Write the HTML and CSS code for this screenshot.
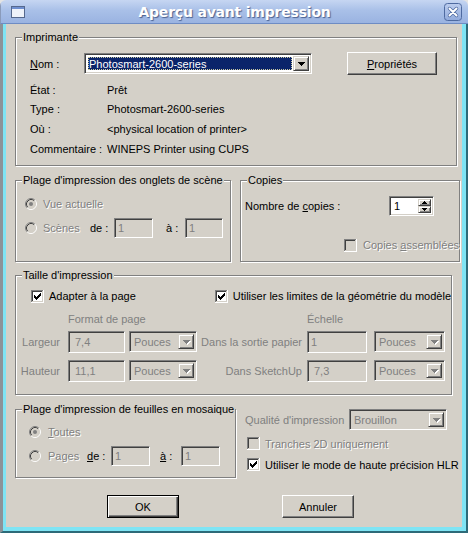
FILE: index.html
```html
<!DOCTYPE html>
<html lang="fr">
<head>
<meta charset="utf-8">
<title>Aperçu avant impression</title>
<link rel="stylesheet" href="styles.css">
</head>
<body>
<svg class="defs" width="0" height="0" aria-hidden="true">
  <defs>
    <symbol id="radio" viewBox="0 0 12 12">
      <circle cx="6" cy="6" r="4" fill="#d4d0c8"/>
      <path d="M2.11 9.89A5.5 5.5 0 0 1 9.89 2.11" fill="none" stroke="#808080"/>
      <path d="M9.89 2.11A5.5 5.5 0 0 1 2.11 9.89" fill="none" stroke="#ffffff"/>
      <path d="M2.82 9.18A4.5 4.5 0 0 1 9.18 2.82" fill="none" stroke="#404040"/>
      <path d="M9.18 2.82A4.5 4.5 0 0 1 2.82 9.18" fill="none" stroke="#d4d0c8"/>
    </symbol>
    <symbol id="radio-on" viewBox="0 0 12 12">
      <use href="#radio"/>
      <circle cx="6" cy="6" r="2" fill="#808080"/>
    </symbol>
    <symbol id="box" viewBox="0 0 13 13">
      <rect x="0" y="0" width="13" height="13" fill="#ffffff"/>
      <rect x="0" y="0" width="12" height="1" fill="#808080"/>
      <rect x="0" y="0" width="1" height="12" fill="#808080"/>
      <rect x="1" y="1" width="10" height="1" fill="#404040"/>
      <rect x="1" y="1" width="1" height="10" fill="#404040"/>
      <rect x="11" y="1" width="1" height="11" fill="#d4d0c8"/>
      <rect x="1" y="11" width="11" height="1" fill="#d4d0c8"/>
    </symbol>
    <symbol id="box-off" viewBox="0 0 13 13">
      <use href="#box"/>
      <rect x="2" y="2" width="9" height="9" fill="#d4d0c8"/>
    </symbol>
    <symbol id="box-on" viewBox="0 0 13 13">
      <use href="#box"/>
      <path fill="#000" d="M3 5h1v3h-1zM4 6h1v3h-1zM5 7h1v3h-1zM6 6h1v3h-1zM7 5h1v3h-1zM8 4h1v3h-1zM9 3h1v3h-1z"/>
    </symbol>
    <symbol id="arrow" viewBox="0 0 7 4">
      <path d="M0 0h7v1h-1v1h-1v1h-1v1h-1v-1h-1v-1h-1v-1h-1z"/>
    </symbol>
    <symbol id="arrow-up" viewBox="0 0 5 3">
      <path d="M2 0h1v1h1v1h1v1h-5v-1h1v-1h1z"/>
    </symbol>
    <symbol id="arrow-down" viewBox="0 0 5 3">
      <path d="M0 0h5v1h-1v1h-1v1h-1v-1h-1v-1h-1z"/>
    </symbol>
  </defs>
</svg>

<div class="window">
  <div class="titlebar">
    <svg class="app-icon" viewBox="0 0 14 12" width="14" height="12">
      <rect x="0.5" y="0.5" width="13" height="11" fill="#eef2fa" stroke="#55688e"/>
      <rect x="1" y="1" width="12" height="2" fill="#6f8fd0"/>
    </svg>
    <div class="title">Aperçu avant impression</div>
    <svg class="close" viewBox="0 0 18 18" width="18" height="18">
      <defs>
        <linearGradient id="cg" x1="0" y1="0" x2="0" y2="1">
          <stop offset="0" stop-color="#bccdee"/>
          <stop offset="1" stop-color="#92abdc"/>
        </linearGradient>
      </defs>
      <rect x="0.5" y="0.5" width="17" height="17" rx="3" fill="url(#cg)" stroke="#4e6aa0"/>
      <path d="M5.5 5.5l7 7M12.5 5.5l-7 7" stroke="#4e6aa0" stroke-width="3.4" stroke-linecap="round"/>
      <path d="M5.5 5.5l7 7M12.5 5.5l-7 7" stroke="#ffffff" stroke-width="2" stroke-linecap="round"/>
    </svg>
  </div>

  <div class="frame">
    <div class="client">

      <div class="group printer">
        <span class="legend">Imprimante</span>
        <div class="name-row">
          <span class="name-label"><u>N</u>om :</span>
          <div class="combo sunken">
            <span class="combo-value"><span class="sel">Photosmart-2600-series</span></span>
            <span class="drop-btn"><svg class="arr" width="7" height="4"><use href="#arrow"/></svg></span>
          </div>
          <div class="btn props"><u>P</u>ropriétés</div>
        </div>
        <div class="info">
          <span>État :</span><span>Prêt</span>
          <span>Type :</span><span>Photosmart-2600-series</span>
          <span>Où :</span><span>&lt;physical location of printer&gt;</span>
          <span>Commentaire :</span><span>WINEPS Printer using CUPS</span>
        </div>
      </div>

      <div class="row2">
        <div class="group scenes">
          <span class="legend">Plage d'impression des onglets de scène</span>
          <div class="radio-row">
            <svg class="radio" width="12" height="12"><use href="#radio-on"/></svg>
            <span class="dis">Vue actuelle</span>
          </div>
          <div class="radio-row">
            <span class="radio-wrap r-scenes">
              <svg class="radio" width="12" height="12"><use href="#radio"/></svg>
              <span class="dis">Scènes</span>
            </span>
            <span class="de">de :</span>
            <span class="field sunken f-39">1</span>
            <span class="a a-scenes">à :</span>
            <span class="field sunken f-38">1</span>
          </div>
        </div>

        <div class="group copies">
          <span class="legend">Copies</span>
          <div class="copies-row">
            <span class="copies-label">Nombre de <u>c</u>opies :</span>
            <div class="spinner sunken">
              <span class="spin-val">1</span>
              <span class="spin-btns">
                <span class="spin-btn"><svg width="5" height="3"><use href="#arrow-up"/></svg></span>
                <span class="spin-btn"><svg width="5" height="3"><use href="#arrow-down"/></svg></span>
              </span>
            </div>
          </div>
          <div class="collate-row">
            <svg class="check" width="13" height="13"><use href="#box-off"/></svg>
            <span class="dis">Copies <u>a</u>ssemblées</span>
          </div>
        </div>
      </div>

      <div class="group size">
        <span class="legend">Taille d'impression</span>
        <div class="check-row">
          <span class="check-wrap fit">
            <svg class="check" width="13" height="13"><use href="#box-on"/></svg>
            <span>Adapter à la page</span>
          </span>
          <span class="check-wrap">
            <svg class="check" width="13" height="13"><use href="#box-on"/></svg>
            <span>Utiliser les limites de la géométrie du modèle</span>
          </span>
        </div>
        <div class="hdr-row">
          <span class="gray hdr-format">Format de page</span>
          <span class="gray">Échelle</span>
        </div>
        <div class="size-row">
          <span class="gray lbl">Largeur</span>
          <span class="field sunken wide f-57">7,4</span>
          <span class="select sunken s-68"><span class="select-val">Pouces</span><span class="drop-btn dis-btn"><svg class="arr" width="7" height="4"><use href="#arrow"/></svg></span></span>
          <span class="gray lbl2">Dans la sortie papier</span>
          <span class="field sunken f-60">1</span>
          <span class="select sunken s-71"><span class="select-val">Pouces</span><span class="drop-btn dis-btn"><svg class="arr" width="7" height="4"><use href="#arrow"/></svg></span></span>
        </div>
        <div class="size-row second">
          <span class="gray lbl">Hauteur</span>
          <span class="field sunken wide f-57">11,1</span>
          <span class="select sunken s-68"><span class="select-val">Pouces</span><span class="drop-btn dis-btn"><svg class="arr" width="7" height="4"><use href="#arrow"/></svg></span></span>
          <span class="gray lbl2">Dans SketchUp</span>
          <span class="field sunken wide f-60">7,3</span>
          <span class="select sunken s-71"><span class="select-val">Pouces</span><span class="drop-btn dis-btn"><svg class="arr" width="7" height="4"><use href="#arrow"/></svg></span></span>
        </div>
      </div>

      <div class="row4">
        <div class="group tiles">
          <span class="legend">Plage d'impression de feuilles en mosaique</span>
          <div class="radio-row">
            <svg class="radio" width="12" height="12"><use href="#radio-on"/></svg>
            <span class="dis"><u>T</u>outes</span>
          </div>
          <div class="radio-row">
            <span class="radio-wrap r-pages">
              <svg class="radio" width="12" height="12"><use href="#radio"/></svg>
              <span class="dis">Pages</span>
            </span>
            <span class="de"><u>d</u>e :</span>
            <span class="field sunken f-39">1</span>
            <span class="a a-pages"><u>à</u> :</span>
            <span class="field sunken f-39">1</span>
          </div>
        </div>

        <div class="quality-col">
          <div class="quality-row">
            <span class="gray q-label">Qualité d'impression</span>
            <span class="select sunken s-98"><span class="select-val">Brouillon</span><span class="drop-btn dis-btn"><svg class="arr" width="7" height="4"><use href="#arrow"/></svg></span></span>
          </div>
          <div class="opt-row first">
            <svg class="check" width="13" height="13"><use href="#box-off"/></svg>
            <span class="dis">Tranches 2D uniquement</span>
          </div>
          <div class="opt-row">
            <svg class="check" width="13" height="13"><use href="#box-on"/></svg>
            <span>Utiliser le mode de haute précision HLR</span>
          </div>
        </div>
      </div>

      <div class="buttons">
        <div class="btn default">OK</div>
        <div class="btn cancel">Annuler</div>
      </div>

    </div>
  </div>
</div>
</body>
</html>
```
FILE: styles.css
```css
* { box-sizing: border-box; }

body {
  margin: 0;
  background: #e4e4e4;
  font: 11px "Liberation Sans", Arial, sans-serif;
  color: #000;
}

.defs { position: absolute; width: 0; height: 0; }

u { text-decoration: underline; text-underline-offset: 1px; }

.window {
  width: 468px;
  height: 533px;
  display: flex;
  flex-direction: column;
  border-radius: 6px 6px 0 0;
  overflow: hidden;
}

/* ---------- title bar ---------- */
.titlebar {
  flex: none;
  height: 24px;
  display: flex;
  align-items: center;
  padding: 0 6px 0 10px;
  background: linear-gradient(#c6d6f2, #a9c0e8 45%, #9ab3e1);
  border-bottom: 1px solid #6e8cc4;
  border-left: 1px solid #8a9bbb;
}
.app-icon { flex: none; display: block; }
.title {
  flex: 1;
  text-align: center;
  color: #fff;
  font: bold 14px "DejaVu Sans", sans-serif;
  letter-spacing: -0.2px;
  text-shadow: 1px 1px 1px #4a6190;
  padding-top: 1px;
}
.close { flex: none; display: block; }

/* ---------- frame ---------- */
.frame {
  flex: 1;
  display: flex;
  background: #7fe4f4;
  border-left: 3px solid #8d9399;
  border-right: 2px solid #2d6a78;
  border-bottom: 2px solid #2d6a78;
  padding: 0 4px 4px 3px;
}
.client {
  flex: 1;
  background: #d4d0c8;
  padding: 13px 0 0 9px;
  display: flex;
  flex-direction: column;
  align-items: flex-start;
}

/* ---------- common controls ---------- */
.group {
  position: relative;
  flex: none;
  border: 1px solid #808080;
  box-shadow: inset 1px 1px #fff, 1px 1px #fff;
}
.legend {
  position: absolute;
  top: -8px;
  left: 6px;
  padding: 0 1px;
  line-height: 14px;
  background: #d4d0c8;
  white-space: nowrap;
}

.sunken {
  border: 1px solid;
  border-color: #808080 #fff #fff #808080;
  box-shadow: inset 1px 1px #404040, inset -1px -1px #d4d0c8;
}

.btn {
  display: flex;
  align-items: center;
  justify-content: center;
  background: #d4d0c8;
  border: 1px solid;
  border-color: #fff #404040 #404040 #fff;
  box-shadow: inset -1px -1px #808080;
}
.btn.default {
  border-color: #000;
  box-shadow: inset 1px 1px #fff, inset -1px -1px #404040, inset -2px -2px #808080;
}

.dis { color: #808080; text-shadow: 1px 1px #fff; white-space: nowrap; }
.gray { color: #808080; white-space: nowrap; }

.drop-btn {
  flex: none;
  width: 16px;
  display: flex;
  align-items: center;
  justify-content: center;
  background: #d4d0c8;
  border: 1px solid;
  border-color: #d4d0c8 #404040 #404040 #d4d0c8;
  box-shadow: inset 1px 1px #fff, inset -1px -1px #808080;
}
.arr { display: block; fill: #000; }
.dis-btn .arr { fill: #808080; filter: drop-shadow(1px 1px 0 #fff); }

.field {
  display: flex;
  align-items: center;
  height: 20px;
  padding-left: 3px;
  color: #808080;
  background: #d4d0c8;
}
.field.wide { padding-left: 6px; }
.f-38 { width: 38px; }
.f-39 { width: 39px; }
.f-57 { width: 57px; height: 22px; }
.f-60 { width: 60px; height: 22px; }

.select {
  display: flex;
  height: 21px;
  padding: 2px;
  background: #d4d0c8;
}
.select-val {
  flex: 1;
  display: flex;
  align-items: center;
  padding-left: 2px;
  color: #808080;
}
.s-68 { width: 68px; }
.s-71 { width: 71px; }
.s-98 { width: 98px; }

.radio, .check { display: block; flex: none; }

/* ---------- printer group ---------- */
.printer {
  width: 442px;
  height: 129px;
  padding-left: 14px;
}
.name-row {
  display: flex;
  align-items: center;
  height: 23px;
  margin-top: 14px;
}
.name-label { width: 54px; }
.combo {
  display: flex;
  width: 228px;
  height: 21px;
  padding: 2px;
  background: #fff;
}
.combo-value { flex: 1; padding: 1px; display: flex; }
.sel {
  flex: 1;
  display: flex;
  align-items: center;
  padding-left: 1px;
  background: #0a246a;
  color: #fff;
  outline: 1px dotted #c8c8a0;
  outline-offset: -1px;
}
.props { width: 90px; height: 23px; margin-left: 35px; }

.info {
  display: grid;
  grid-template-columns: 77px auto;
  grid-auto-rows: 19.6px;
  align-items: center;
  margin-top: 5px;
  white-space: nowrap;
}

/* ---------- row 2 ---------- */
.row2 { display: flex; gap: 9px; margin-top: 14px; }
.scenes {
  width: 216px;
  height: 82px;
  padding: 11px 0 0 9px;
}
.radio-row {
  display: flex;
  align-items: center;
  height: 24px;
}
.radio-row > .radio { margin-right: 6px; }
.radio-wrap { display: flex; align-items: center; }
.radio-wrap .radio { margin-right: 6px; }
.r-scenes { width: 65px; }
.de { width: 24px; white-space: nowrap; }
.a { width: 19px; white-space: nowrap; }
.a-scenes { margin-left: 13px; }

.copies {
  width: 220px;
  height: 82px;
  padding: 15px 0 0 4px;
}
.copies-row { display: flex; align-items: center; height: 20px; }
.copies-label { width: 144px; }
.spinner {
  display: flex;
  width: 45px;
  height: 20px;
  padding: 2px;
  background: #fff;
}
.spin-val { flex: 1; display: flex; align-items: center; padding-left: 2px; }
.spin-btns { display: flex; flex-direction: column; width: 13px; }
.spin-btn {
  flex: 1;
  display: flex;
  align-items: center;
  justify-content: center;
  background: #d4d0c8;
  border: 1px solid;
  border-color: #d4d0c8 #404040 #404040 #d4d0c8;
  box-shadow: inset 1px 1px #fff, inset -1px -1px #808080;
}
.spin-btn svg { display: block; fill: #000; }
.collate-row {
  display: flex;
  align-items: center;
  height: 20px;
  margin-top: 19px;
  padding-left: 99px;
  gap: 6px;
}

/* ---------- size group ---------- */
.size {
  width: 437px;
  height: 120px;
  margin-top: 13px;
  padding-top: 11px;
}
.check-row {
  display: flex;
  align-items: center;
  height: 18px;
  padding-left: 15px;
}
.check-wrap { display: flex; align-items: center; gap: 5px; white-space: nowrap; }
.check-wrap.fit { width: 188px; }
.hdr-row {
  display: flex;
  align-items: center;
  height: 16px;
  margin-top: 6px;
}
.hdr-format { margin-left: 52px; width: 239px; }
.size-row {
  display: flex;
  align-items: flex-start;
  height: 22px;
  margin-top: 4px;
}
.size-row.second { margin-top: 7px; }
.size-row > .gray { align-self: center; }
.lbl { width: 52px; text-align: right; padding-right: 8px; }
.size-row .f-57 { margin-right: 4px; }
.lbl2 { width: 110px; text-align: right; padding-right: 5px; }
.size-row .f-60 { margin-right: 7px; }

/* ---------- row 4 ---------- */
.row4 { display: flex; margin-top: 14px; }
.tiles {
  width: 221px;
  height: 69px;
  padding: 10px 0 0 13px;
}
.tiles .radio-row > .radio,
.tiles .radio-wrap .radio { margin-right: 7px; }
.r-pages { width: 58px; }
.a-pages { margin-left: 10px; width: 21px; }

.quality-col { margin-left: 9px; }
.quality-row { display: flex; align-items: center; height: 21px; }
.q-label { width: 104px; }
.opt-row {
  display: flex;
  align-items: center;
  height: 21px;
  padding-left: 2px;
  gap: 5px;
  white-space: nowrap;
}
.opt-row.first { margin-top: 3px; }

/* ---------- buttons ---------- */
.buttons {
  display: flex;
  margin-top: 17px;
  margin-left: 92px;
}
.buttons .btn { width: 72px; height: 23px; }
.buttons .cancel { margin-left: 103px; }
```
